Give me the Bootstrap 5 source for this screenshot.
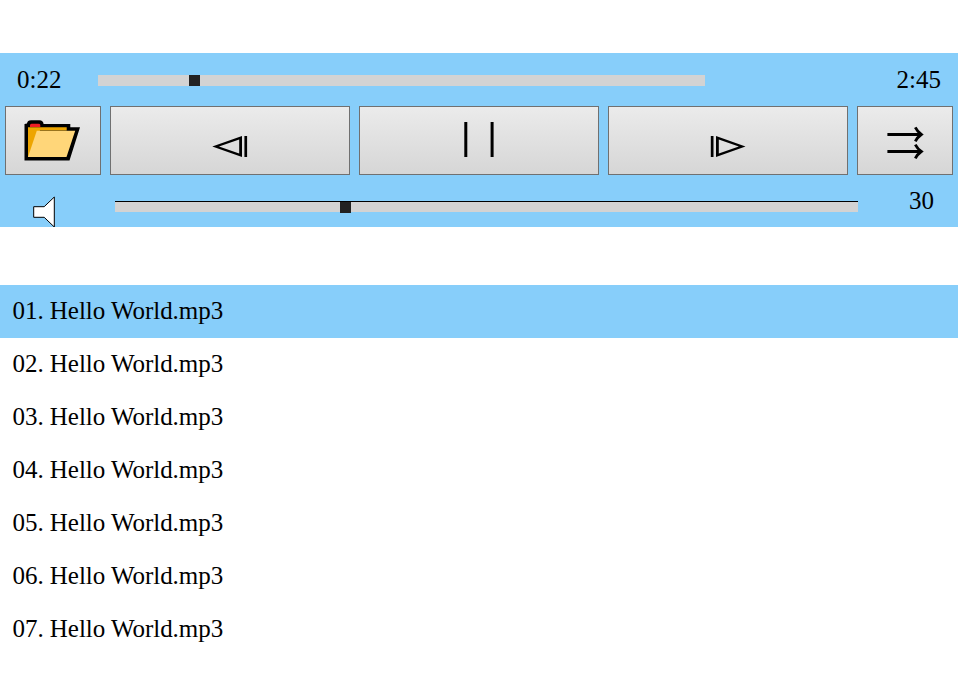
<!DOCTYPE html>
<html lang="en">
<head>
<meta charset="utf-8">
<meta name="viewport" content="width=device-width, initial-scale=1">
<title>Music player</title>
<link href="https://cdn.jsdelivr.net/npm/bootstrap@5.3.0/dist/css/bootstrap.min.css" rel="stylesheet">
<style>
body { font: 25px/53px "Liberation Serif", "Times New Roman", serif; color: #000; background: #fff; padding-top: 53px; overflow: hidden; }
.player { background: #87cefa; height: 174px; margin-bottom: 58px; }
.seek-row { height: 53px; padding: 0 17px; }
.seek-row .time-now { width: 81px; }
.seek-bar { width: 607px; height: 11px; margin-top: 1px; background: #d3d3d3; }
.thumb { width: 11px; height: 11px; background: #222; }
.controls { height: 69px; padding: 0 5px; gap: 9px; }
.controls .btn { border: 1px solid #707070; border-radius: 0; background: linear-gradient(#ebebeb, #d6d6d6); line-height: 0; }
.side-btn { width: 96px; }
.volume-row { height: 52px; line-height: 52px; padding-right: 24px; }
.speaker { width: 115px; }
.volume-bar { width: 743px; height: 11px; margin-top: 26px; border-top: 1px solid #000; background: #d3d3d3; }
.tracks .list-group-item { height: 53px; line-height: 51px; letter-spacing: -.04px; padding: 0 12.5px; border: 0; color: #000; background: transparent; }
.tracks .list-group-item.active { background: #87cefa; margin: 0; }
</style>
<script src="https://cdn.jsdelivr.net/npm/bootstrap@5.3.0/dist/js/bootstrap.bundle.min.js"></script>
</head>
<body>
<main>
  <section class="player">
    <div class="seek-row d-flex align-items-center">
      <span class="time-now">0:22</span>
      <div class="seek-bar"><div class="thumb" style="margin-left:91px"></div></div>
      <span class="ms-auto">2:45</span>
    </div>
    <div class="controls d-flex">
      <button class="btn side-btn p-0" type="button" aria-label="Open">
        <svg width="94" height="67" viewBox="6 107 94 67">
          <path d="M24.5 124 27 123.5Q27.5 120.3 31 120.3H39.5Q43 120.3 43.6 124H70.3V127.2H80L69.5 160.5H24.5Z"/>
          <path fill="#eda500" d="M28 127.2H66.7V130.6H40L30 157H28Z"/>
          <path fill="#ffd679" d="M36.8 130.8H75.2L66.5 157H28Z"/>
          <path fill="#ed1c24" d="M30 127V125Q30.3 123.7 31.8 123.7H38.6Q40 123.7 40.3 125V127Z"/>
        </svg>
      </button>
      <button class="btn flex-fill p-0" type="button" aria-label="Previous">
        <svg width="238" height="67" viewBox="111 107 238 67">
          <path fill-rule="evenodd" d="M212.3 146.5 242 136V157ZM219 146.5 239.2 153.4V139.6Z"/>
          <path d="M244.4 136H247.1V157H244.4Z"/>
        </svg>
      </button>
      <button class="btn flex-fill p-0" type="button" aria-label="Pause">
        <svg width="238" height="67" viewBox="360 107 238 67">
          <path d="M464.3 122H467.3V157H464.3ZM490.6 122H493.6V157H490.6Z"/>
        </svg>
      </button>
      <button class="btn flex-fill p-0" type="button" aria-label="Next">
        <svg width="238" height="67" viewBox="609 107 238 67">
          <path fill-rule="evenodd" d="M745.5 146.5 716 136V157ZM738.8 146.5 718.8 153.4V139.6Z"/>
          <path d="M710.8 136H713.5V157H710.8Z"/>
        </svg>
      </button>
      <button class="btn side-btn p-0" type="button" aria-label="Shuffle">
        <svg width="94" height="67" viewBox="858 107 94 67" fill="none" stroke="#000">
          <path stroke-width="3" d="M887.4 134.5H920.5M887.4 151.5H920.5"/>
          <path stroke-width="2.8" d="M915.3 127.4Q917.5 131.8 921.3 134.5Q917.5 137.2 915.3 141.4M915.3 144.6Q917.5 148.8 921.3 151.5Q917.5 154.2 915.3 158.4"/>
        </svg>
      </button>
    </div>
    <div class="volume-row d-flex">
      <svg class="speaker" height="52" viewBox="0 175 115 52">
        <path fill="#fff" stroke="#000" d="M33.7 206.7H44.2L54.3 197V227L44.2 217.3H33.7Z"/>
      </svg>
      <div class="volume-bar"><div class="thumb" style="margin-left:225px"></div></div>
      <span class="ms-auto">30</span>
    </div>
  </section>
  <ul class="tracks list-group list-group-flush">
    <li class="list-group-item active">01. Hello World.mp3</li>
    <li class="list-group-item">02. Hello World.mp3</li>
    <li class="list-group-item">03. Hello World.mp3</li>
    <li class="list-group-item">04. Hello World.mp3</li>
    <li class="list-group-item">05. Hello World.mp3</li>
    <li class="list-group-item">06. Hello World.mp3</li>
    <li class="list-group-item">07. Hello World.mp3</li>
  </ul>
</main>
</body>
</html>
